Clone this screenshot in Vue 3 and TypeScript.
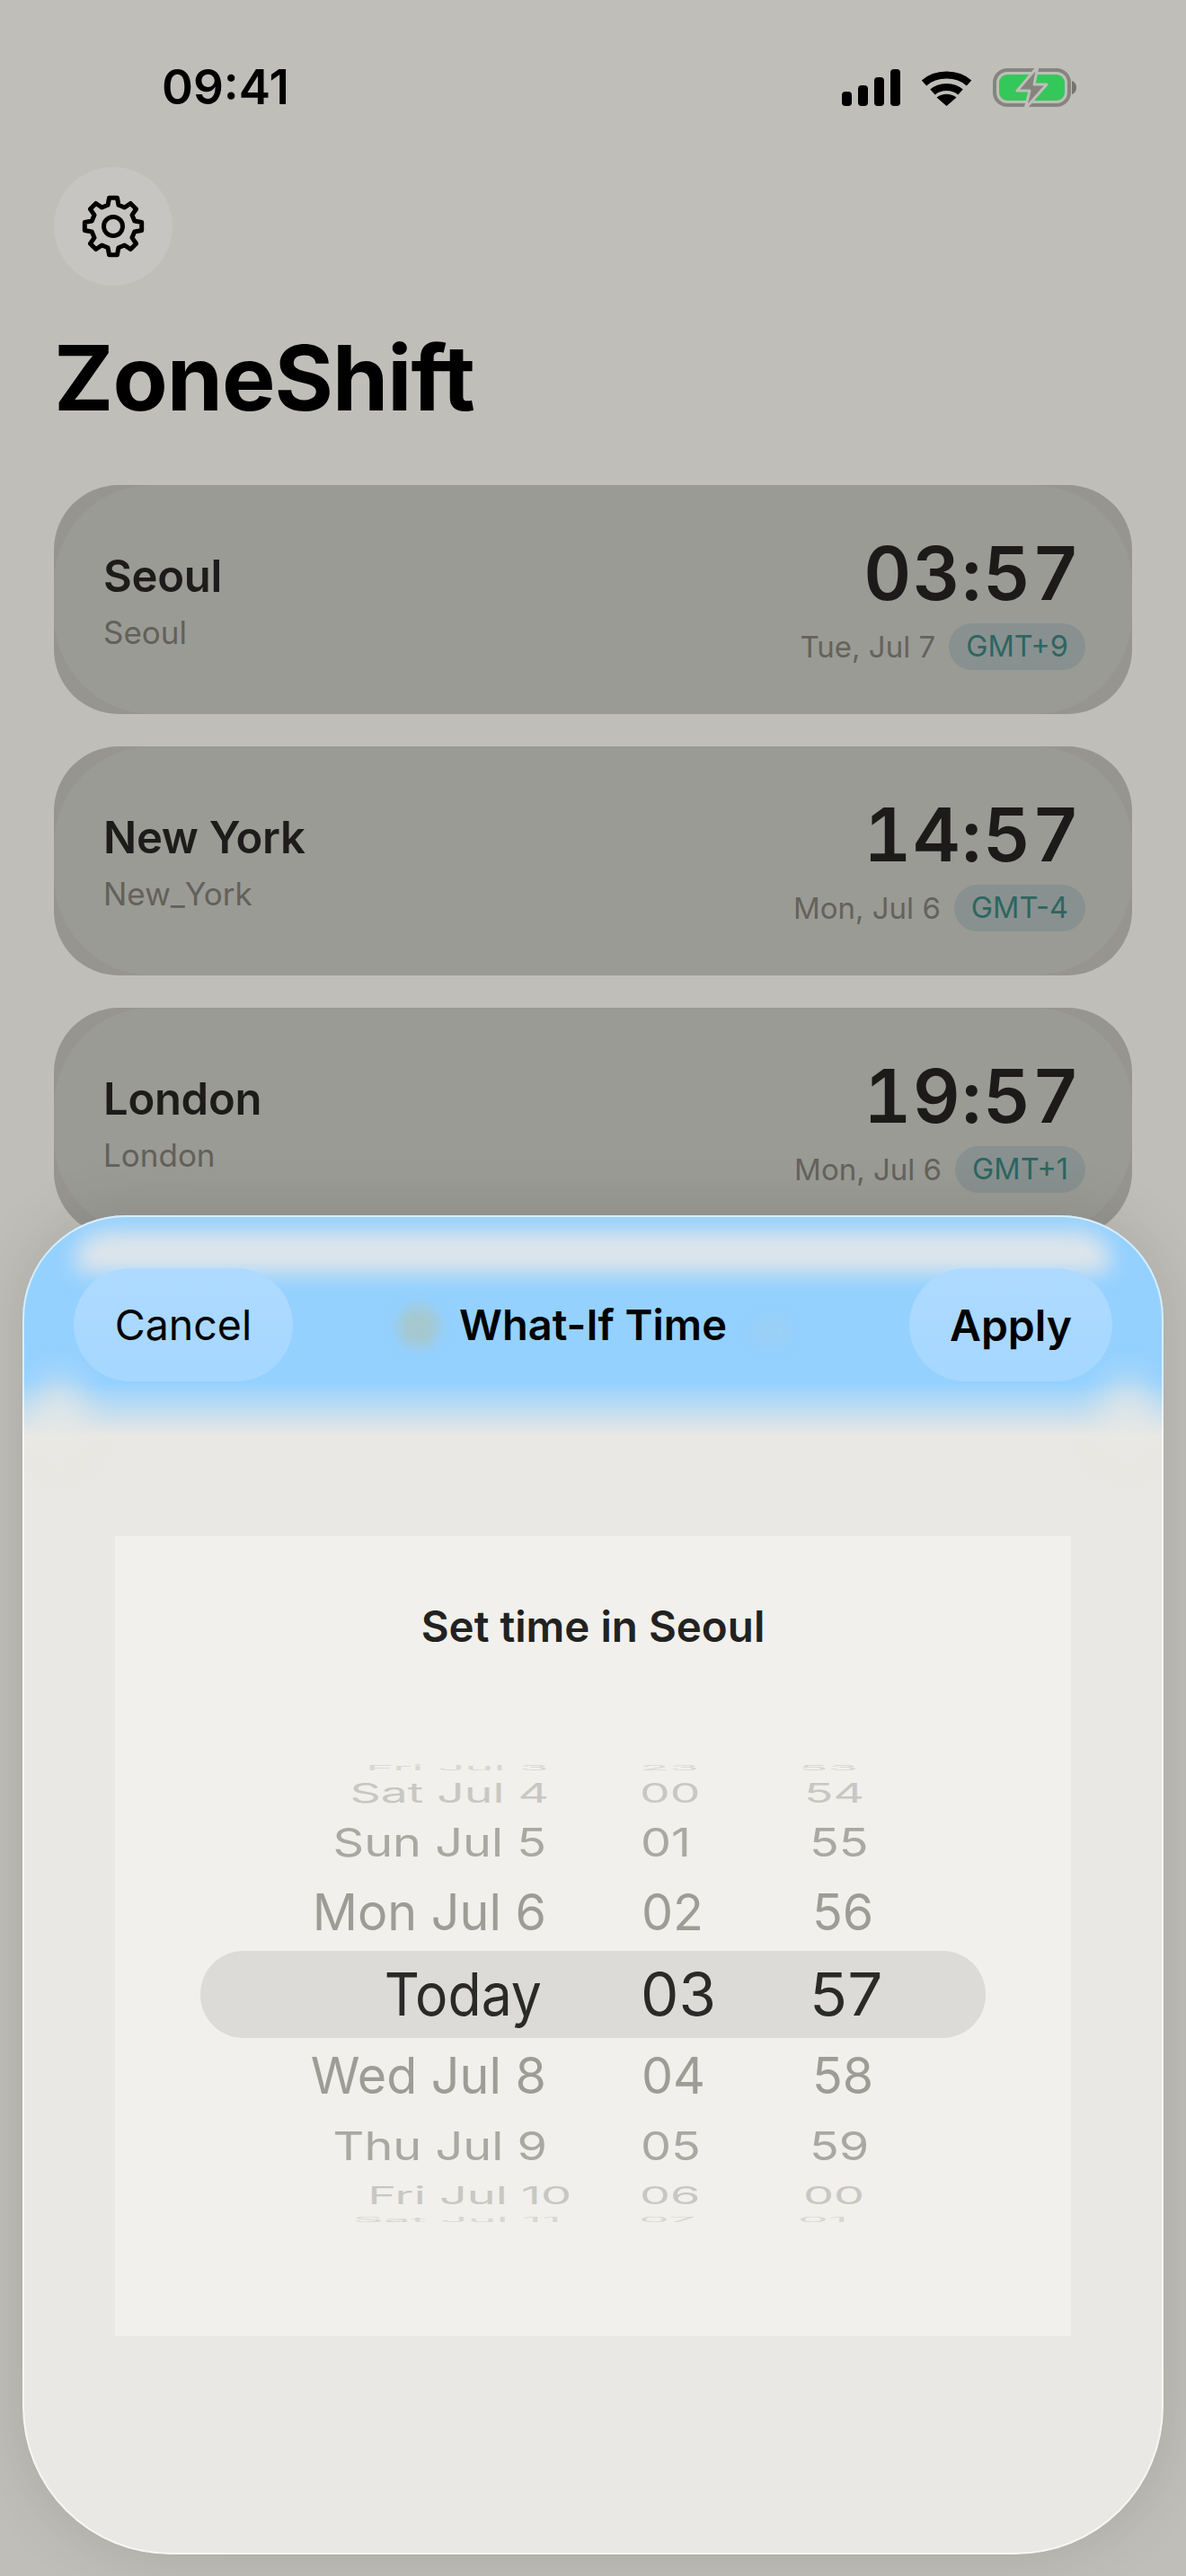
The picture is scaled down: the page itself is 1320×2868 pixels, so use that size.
<template>
  <div class="screen">
    <div class="status-bar">
      <span class="clock">09:41</span>
      <div class="status-icons">
        <svg class="signal" width="65" height="41" viewBox="0 0 65 41">
          <rect x="0" y="25" width="11" height="16" rx="4" />
          <rect x="18" y="18" width="11" height="23" rx="4" />
          <rect x="36" y="9" width="11" height="32" rx="4" />
          <rect x="54" y="0" width="11" height="41" rx="4" />
        </svg>
        <svg class="wifi" width="57" height="41" viewBox="0 0 57 41">
          <path d="M3.5 15.5C16.5 3.5 40.5 3.5 53.5 15.5" fill="none" stroke="#000" stroke-width="8" />
          <path d="M13 25.5C21 18 36 18 44 25.5" fill="none" stroke="#000" stroke-width="8" />
          <path d="M17.5 31.5C24 26.5 33 26.5 39.5 31.5L28.5 41Z" fill="#000" />
        </svg>
        <svg class="battery" width="93" height="47" viewBox="0 0 93 47">
          <rect x="2" y="4" width="83" height="39" rx="14" fill="none" stroke="#85847f" stroke-width="4" />
          <rect x="7" y="9" width="73" height="29" rx="9" fill="#34c85a" />
          <path d="M88 16C91 17 93 20 93 23.5C93 27 91 30 88 31Z" fill="#75746f" />
          <path d="M50 0L27 27H41L36 47L60 20H46Z" fill="#85847f" stroke="#bfbeb9" stroke-width="3" stroke-linejoin="round" />
        </svg>
      </div>
    </div>

    <button class="gear-btn" type="button" aria-label="Settings">
      <svg width="72" height="72" viewBox="0 0 72 72" fill="none" stroke="#000" stroke-width="5" stroke-linejoin="round">
        <path :d="gearPath" />
        <circle cx="36" cy="36" r="10.5" />
      </svg>
    </button>

    <h1 class="app-title">ZoneShift</h1>

    <div class="card-list">
      <div v-for="z in zones" :key="z.city" class="zone-card">
        <div class="zone-names">
          <div class="zone-city">{{ z.city }}</div>
          <div class="zone-id">{{ z.id }}</div>
        </div>
        <div class="zone-right">
          <div class="zone-time">{{ z.time }}</div>
          <div class="zone-meta">
            <span class="zone-date">{{ z.date }}</span>
            <span class="gmt-badge">{{ z.gmt }}</span>
          </div>
        </div>
      </div>
    </div>

    <div class="sheet">
      <div class="glass-blue"></div>
      <div class="glass-band"></div>
      <div class="glass-corner glass-corner-l"></div>
      <div class="glass-corner glass-corner-r"></div>
      <div class="glass-spot spot-a"></div>
      <div class="glass-spot spot-b"></div>

      <div class="sheet-head">
        <button class="pill pill-cancel" type="button">Cancel</button>
        <div class="sheet-title">What-If Time</div>
        <button class="pill pill-apply" type="button">Apply</button>
      </div>

      <div class="panel">
        <div class="panel-title">Set time in Seoul</div>
        <div class="picker">
          <div class="picker-band"></div>
          <div v-for="r in wheel" :key="r.date" class="wheel-row" :style="{ height: r.h + 'px', color: r.color }">
            <span class="cell cell-date" :class="{ active: r.active }" :style="cellStyle(r, r.dx, r.active ? 0.92 : 1)">{{ r.date }}</span>
            <span class="cell cell-hour" :class="{ active: r.active }" :style="cellStyle(r, r.hx, r.active ? 1.02 : 1)">{{ r.hour }}</span>
            <span class="cell cell-min" :class="{ active: r.active }" :style="cellStyle(r, r.mx, r.active ? 1.05 : 1)">{{ r.min }}</span>
          </div>
        </div>
      </div>
      <div class="sheet-edge"></div>
    </div>
  </div>
</template>

<script setup lang="ts">
interface Zone {
  city: string;
  id: string;
  time: string;
  date: string;
  gmt: string;
}

interface WheelRow {
  date: string;
  hour: string;
  min: string;
  h: number;
  sx: number;
  sy: number;
  color: string;
  dx: number;
  hx: number;
  mx: number;
  active?: boolean;
}

const zones: Zone[] = [
  { city: 'Seoul', id: 'Seoul', time: '03:57', date: 'Tue, Jul 7', gmt: 'GMT+9' },
  { city: 'New York', id: 'New_York', time: '14:57', date: 'Mon, Jul 6', gmt: 'GMT-4' },
  { city: 'London', id: 'London', time: '19:57', date: 'Mon, Jul 6', gmt: 'GMT+1' },
];

const wheel: WheelRow[] = [
  { date: 'Fri Jul 3', hour: '23', min: '53', h: 10, sx: 1, sy: 0.15, color: '#d8d7d3', dx: 3, hx: 0, mx: -15 },
  { date: 'Sat Jul 4', hour: '00', min: '54', h: 46, sx: 0.99, sy: 0.56, color: '#c8c7c3', dx: 3, hx: 0, mx: -9 },
  { date: 'Sun Jul 5', hour: '01', min: '55', h: 64, sx: 1, sy: 0.82, color: '#a9a8a3', dx: 0, hx: 1, mx: -3 },
  { date: 'Mon Jul 6', hour: '02', min: '56', h: 92, sx: 1.03, sy: 1.05, color: '#9d9c97', dx: 0, hx: 2, mx: 0 },
  { date: 'Today', hour: '03', min: '57', h: 90, sx: 1, sy: 1, color: '#2a2a29', dx: -5, hx: 1, mx: -3, active: true },
  { date: 'Wed Jul 8', hour: '04', min: '58', h: 92, sx: 1.03, sy: 1.05, color: '#9d9c97', dx: 0, hx: 2, mx: 0 },
  { date: 'Thu Jul 9', hour: '05', min: '59', h: 64, sx: 1, sy: 0.82, color: '#a9a8a3', dx: 1, hx: 1, mx: -3 },
  { date: 'Fri Jul 10', hour: '06', min: '00', h: 46, sx: 1, sy: 0.51, color: '#c8c7c3', dx: 28, hx: 0, mx: -10 },
  { date: 'Sat Jul 11', hour: '07', min: '01', h: 10, sx: 1, sy: 0.13, color: '#d8d7d3', dx: 17, hx: -1, mx: -16 },
];

const cellStyle = (r: WheelRow, x: number, extraX = 1) => ({
  transform: `translateX(${x}px) scale(${r.sx * extraX}, ${r.sy})`,
});

// 8 teeth, alternating tip and root points around the middle of the icon
const buildGear = () => {
  const pts: string[] = [];
  const at = (r: number, a: number) => {
    const rad = (a * Math.PI) / 180;
    return `${(36 + r * Math.cos(rad)).toFixed(2)} ${(36 + r * Math.sin(rad)).toFixed(2)}`;
  };
  for (let i = 0; i < 8; i++) {
    const a = i * 45 - 90;
    pts.push(at(24.5, a - 14), at(32, a - 8), at(32, a + 8), at(24.5, a + 14));
  }
  return `M${pts.join('L')}Z`;
};

const gearPath = buildGear();
</script>

<style scoped>
.screen {
  position: relative;
  width: 1320px;
  height: 2868px;
  overflow: hidden;
  background: #bfbeb9;
  font-family: Inter, "Noto Sans", sans-serif;
  color: #000;
}

.status-bar {
  display: flex;
  justify-content: space-between;
  align-items: center;
  height: 47px;
  margin-top: 74px;
  padding: 0 122px 0 180px;
}

.clock {
  font-size: 53px;
  font-weight: 600;
  line-height: 47px;
}

.status-icons {
  display: flex;
  align-items: center;
  gap: 23px;
}

.signal {
  fill: #000;
}

.gear-btn {
  display: flex;
  align-items: center;
  justify-content: center;
  width: 132px;
  height: 132px;
  margin: 65px 0 0 60px;
  padding: 0;
  border: 0;
  border-radius: 50%;
  background: #c6c5c1;
}

.app-title {
  margin: 49px 0 0 60px;
  font-size: 100px;
  font-weight: 700;
  letter-spacing: -1px;
  line-height: 108px;
}

.card-list {
  display: flex;
  flex-direction: column;
  gap: 36px;
  margin: 65px 60px 0;
}

.zone-card {
  position: relative;
  display: flex;
  justify-content: space-between;
  align-items: flex-start;
  height: 255px;
  padding: 62px 60px 0 55px;
  box-sizing: border-box;
  border-radius: 72px;
  background: #979590;
}

.zone-card::before {
  content: "";
  position: absolute;
  inset: 0;
  border-radius: 110px;
  background: #9a9b95;
}

.zone-names,
.zone-right {
  position: relative;
}

.zone-city {
  font-size: 49px;
  font-weight: 600;
  letter-spacing: -0.3px;
  line-height: 60px;
  color: #1d1c1a;
  margin-top: 10px;
}

.zone-id {
  margin-top: 10px;
  font-size: 35px;
  line-height: 44px;
  color: #63605a;
}

.zone-right {
  display: flex;
  flex-direction: column;
  align-items: flex-end;
  margin-top: -14px;
}

.zone-time {
  margin-right: -3px;
  font-size: 82px;
  font-weight: 600;
  font-feature-settings: "tnum";
  letter-spacing: 1.5px;
  line-height: 102px;
  color: #1c1b19;
}

.zone-meta {
  display: flex;
  align-items: center;
  gap: 15px;
  margin-right: -8px;
  margin-top: 4px;
}

.zone-date {
  font-size: 33px;
  color: #65625b;
}

.gmt-badge {
  padding: 0 19px;
  height: 52px;
  line-height: 52px;
  border-radius: 26px;
  background: #889190;
  font-size: 32.5px;
  color: #2e6560;
}

.sheet {
  position: absolute;
  left: 25px;
  top: 1353px;
  width: 1270px;
  height: 1491px;
  overflow: hidden;
  border-radius: 115px 115px 165px 165px;
  background: #e9e8e4;
  box-shadow: 0 0 70px rgba(0, 0, 0, 0.12);
}

.sheet-edge {
  position: absolute;
  inset: 0;
  border: 2px solid rgba(255, 255, 255, 0.62);
  border-radius: inherit;
  pointer-events: none;
}

.glass-blue {
  position: absolute;
  inset: 0 0 auto 0;
  height: 245px;
  background: linear-gradient(to bottom, #94d1ff 0, #94d1ff 76%, #e9e8e4 100%);
}

.glass-band {
  position: absolute;
  top: 18px;
  left: 58px;
  right: 58px;
  height: 46px;
  border-radius: 36px 36px 10px 10px;
  background: #dfe5ea;
  filter: blur(12px);
}

.glass-corner {
  position: absolute;
  top: 180px;
  width: 64px;
  height: 90px;
  border-radius: 50%;
  background: rgba(232, 232, 228, 0.75);
  filter: blur(18px);
}

.glass-corner-l {
  left: 8px;
}

.glass-corner-r {
  right: 8px;
}

.glass-spot {
  position: absolute;
  border-radius: 50%;
  filter: blur(7px);
}

.spot-a {
  left: 418px;
  top: 100px;
  width: 46px;
  height: 48px;
  background: rgba(170, 198, 195, 0.8);
}

.spot-b {
  left: 810px;
  top: 112px;
  width: 46px;
  height: 36px;
  background: rgba(170, 205, 230, 0.35);
}

.sheet-head {
  position: relative;
  display: flex;
  align-items: center;
  justify-content: space-between;
  height: 126px;
  margin-top: 59px;
  padding: 0 57px;
}

.pill {
  height: 126px;
  padding: 0;
  border: 0;
  border-radius: 63px;
  background: linear-gradient(to bottom, #aedaff, #a5d7ff);
  font-family: inherit;
  font-size: 48px;
  color: #000;
}

.pill-cancel {
  width: 244px;
  font-size: 46.5px;
  font-weight: 400;
}

.pill-apply {
  width: 226px;
  font-weight: 600;
}

.sheet-title {
  position: absolute;
  left: 0;
  right: 0;
  text-align: center;
  font-size: 47px;
  font-weight: 600;
  line-height: 60px;
}

.panel {
  position: relative;
  width: 1064px;
  height: 891px;
  margin: 172px 0 0 103px;
  background: #f1f0ec;
}

.panel-title {
  padding-top: 71px;
  text-align: center;
  font-size: 47.5px;
  font-weight: 600;
  line-height: 60px;
  color: #222220;
}

.picker {
  position: relative;
  margin-top: 122px;
  overflow: hidden;
}

.picker-band {
  position: absolute;
  left: 95px;
  top: 209px;
  width: 874px;
  height: 97px;
  border-radius: 48px;
  background: #dcdbd7;
}

.wheel-row {
  position: relative;
  display: flex;
  align-items: center;
  font-size: 54px;
}

.cell {
  display: block;
  white-space: nowrap;
  line-height: 1;
}

.cell-date {
  width: 480px;
  text-align: right;
  transform-origin: right center;
}

.cell-hour {
  width: 192px;
  margin-left: 104px;
  transform-origin: left center;
}

.cell-min {
  transform-origin: left center;
}

.cell.active {
  font-size: 66px;
}
</style>

<style>
html,
body {
  background: #bfbeb9;
}
</style>
